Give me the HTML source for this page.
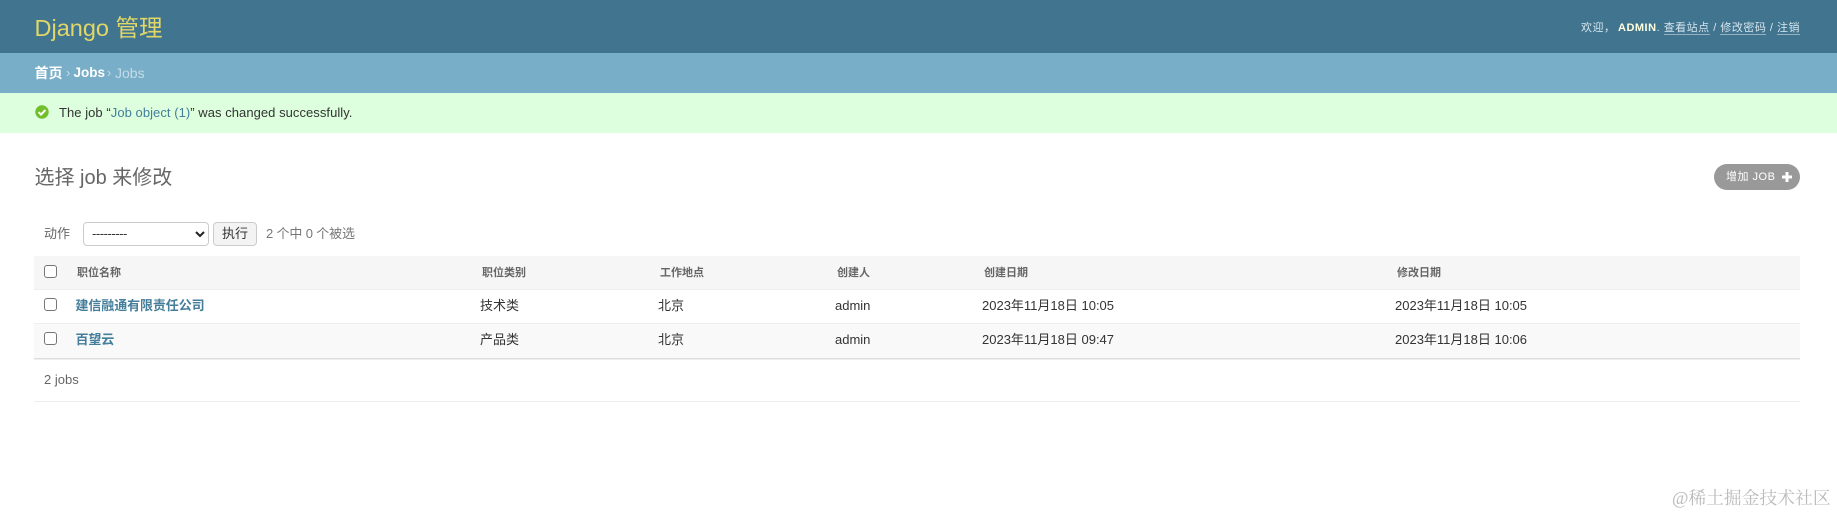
<!DOCTYPE html>
<html><head><meta charset="utf-8"><title>选择 job 来修改</title>
<style>
html,body{margin:0;padding:0;background:#fff}
body{width:1837px;height:514px;position:relative;overflow:hidden;font-family:"Liberation Sans","Noto Sans CJK SC",sans-serif;font-size:13px;color:#333}
.a{position:absolute;white-space:nowrap;line-height:20px}
.b{position:absolute}
.th{font-size:11px;font-weight:bold;color:#666;top:263px}
.td{color:#333;font-size:13px}
.r1{top:296px}.r2{top:330px}
.lnk{color:#447e9b;font-weight:bold;font-size:13px}
.cb{position:absolute;left:44px;width:11px;height:11px;border:1px solid #767676;border-radius:3px;background:#fff}
u{text-decoration:none;border-bottom:1px solid rgba(255,255,255,.45)}
</style></head><body>
<div class="b" style="left:0;top:0;width:1837px;height:53px;background:#41748f"></div>
<div class="b" style="left:0;top:53px;width:1837px;height:40px;background:#79aec8"></div>
<div class="b" style="left:0;top:93px;width:1837px;height:40px;background:#dfd"></div>

<div class="a" style="left:34.5px;top:13px;font-size:23.5px;line-height:30px;color:#e0d768">Django 管理</div>
<div class="a" style="left:1581px;top:18px;font-size:11px;color:#d5e6ee;letter-spacing:.5px">欢迎，</div>
<div class="a" style="left:1618px;top:18px;font-size:11px;color:#d5e6ee;letter-spacing:.5px"><b style="color:#ffffe0">ADMIN</b>. <u>查看站点</u> / <u>修改密码</u> / <u>注销</u></div>

<div class="a" style="left:34.5px;top:63px;font-size:14px;color:#fff;font-weight:bold">首页</div>
<div class="a" style="left:66px;top:63px;font-size:13px;color:#c4dce8">›</div>
<div class="a" style="left:73.5px;top:63px;font-size:13.5px;color:#fff;font-weight:bold">Jobs</div>
<div class="a" style="left:107px;top:63px;font-size:13px;color:#c4dce8">›</div>
<div class="a" style="left:115px;top:63px;font-size:14px;color:#c4dce8">Jobs</div>

<svg class="b" style="left:35px;top:105px" width="14" height="14" viewBox="0 0 14 14"><circle cx="7" cy="7" r="6.7" fill="#70bf2b"/><path d="M3.6 7.2l2.4 2.4 4.4-4.6" fill="none" stroke="#fff" stroke-width="2"/></svg>
<div class="a" style="left:59px;top:103px;font-size:13px;color:#333;letter-spacing:.05px">The job “<span style="color:#447e9b">Job object (1)</span>” was changed successfully.</div>

<div class="a" style="left:34.5px;top:164px;font-size:20px;line-height:28px;color:#666">选择 job 来修改</div>

<div class="b" style="left:1714px;top:164px;width:86px;height:26px;background:#999;border-radius:13px"></div>
<div class="a" style="left:1726px;top:167px;font-size:11px;color:#fff;letter-spacing:.5px">增加 JOB</div>
<svg class="b" style="left:1781px;top:171px" width="12" height="12" viewBox="0 0 12 12"><path d="M4.5 1h3v3.5H11v3H7.5V11h-3V7.5H1v-3h3.5z" fill="#fff"/></svg>

<div class="a" style="left:44px;top:224px;font-size:13px;color:#666">动作</div>
<div class="b" style="left:83px;top:222px;width:124px;height:22px;border:1px solid #ccc;border-radius:4px;background:#fff"></div>
<div class="a" style="left:92px;top:224px;font-size:13px;color:#333;letter-spacing:-.45px">---------</div>
<svg class="b" style="left:194px;top:230px" width="12" height="9" viewBox="0 0 12 9"><path d="M2 2l4 4 4-4" fill="none" stroke="#222" stroke-width="2"/></svg>
<div class="b" style="left:213px;top:222px;width:42px;height:22px;border:1px solid #ccc;border-radius:4px;background:#f3f3f3"></div>
<div class="a" style="left:222px;top:224px;font-size:13px;color:#333">执行</div>
<div class="a" style="left:266px;top:224px;font-size:13px;color:#777;letter-spacing:-.15px">2 个中 0 个被选</div>

<div class="b" style="left:34px;top:256px;width:1766px;height:34px;background:#f6f6f6;border-bottom:1px solid #eee;box-sizing:border-box"></div>
<div class="b" style="left:34px;top:323px;width:1766px;height:1px;background:#eee"></div>
<div class="b" style="left:34px;top:324px;width:1766px;height:34px;background:#f9f9f9"></div>
<div class="b" style="left:34px;top:358px;width:1766px;height:1px;background:#ddd"></div>
<div class="b" style="left:34px;top:359px;width:1766px;height:1px;background:#eee"></div>
<div class="b" style="left:34px;top:401px;width:1766px;height:1px;background:#eee"></div>

<div class="cb" style="top:265px"></div>
<div class="cb" style="top:298px"></div>
<div class="cb" style="top:332px"></div>

<div class="a th" style="left:77px">职位名称</div>
<div class="a th" style="left:482px">职位类别</div>
<div class="a th" style="left:660px">工作地点</div>
<div class="a th" style="left:837px">创建人</div>
<div class="a th" style="left:984px">创建日期</div>
<div class="a th" style="left:1397px">修改日期</div>

<div class="a lnk r1" style="left:75.5px;letter-spacing:-.1px">建信融通有限责任公司</div>
<div class="a td r1" style="left:480px">技术类</div>
<div class="a td r1" style="left:658px">北京</div>
<div class="a td r1" style="left:835px">admin</div>
<div class="a td r1" style="left:982px">2023年11月18日 10:05</div>
<div class="a td r1" style="left:1395px">2023年11月18日 10:05</div>

<div class="a lnk r2" style="left:75.5px;letter-spacing:-.1px">百望云</div>
<div class="a td r2" style="left:480px">产品类</div>
<div class="a td r2" style="left:658px">北京</div>
<div class="a td r2" style="left:835px">admin</div>
<div class="a td r2" style="left:982px">2023年11月18日 09:47</div>
<div class="a td r2" style="left:1395px">2023年11月18日 10:06</div>

<div class="a" style="left:44px;top:370px;font-size:13px;color:#666">2 jobs</div>

<div class="a" style="left:1672px;top:486px;font-size:17.8px;line-height:24px;color:#bbb;font-family:'Liberation Serif','Noto Serif CJK SC',serif">@稀土掘金技术社区</div>
</body></html>
